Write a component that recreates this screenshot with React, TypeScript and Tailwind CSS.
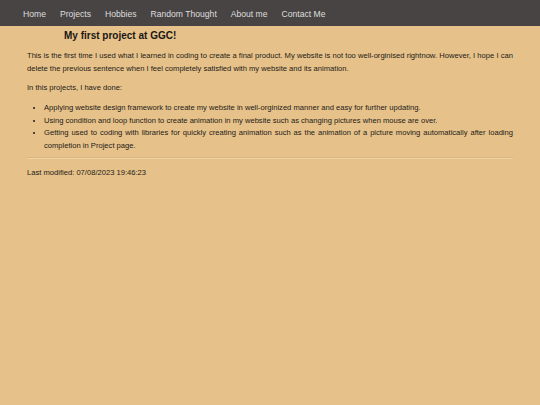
export default function App() {
  const navItems = ['Home', 'Projects', 'Hobbies', 'Random Thought', 'About me', 'Contact Me'];

  return (
    <div className="min-h-[405px] bg-[#e6c28a] text-[#1e1a17] font-['Liberation_Sans',Arial,sans-serif]">
      {/* Top navigation */}
      <nav className="h-[26px] bg-[#484444] flex items-center pt-[3px] pl-[23px] gap-[14px] text-[8.6px] text-[#dedede]">
        {navItems.map((item) => (
          <a key={item} className="leading-none">
            {item}
          </a>
        ))}
      </nav>

      <main className="px-[27px]">
        <h1 className="ml-[37px] pt-[4px] text-[10px] font-bold leading-[12px] text-[#1a1614]">
          My first project at GGC!
        </h1>

        <p className="mt-[8px] text-[7.6px] leading-[12.6px] text-justify">
          This is the first time I used what I learned in coding to create a final product. My website is not too
          well-orginised rightnow. However, I hope I can delete the previous sentence when I feel completely satisfied
          with my website and its animation.
        </p>

        <p className="mt-[6.5px] text-[7.6px] leading-[12.6px]">In this projects, I have done:</p>

        <ul className="mt-[8px] pl-[17px] list-disc text-[7.6px] leading-[12.4px] text-justify">
          <li>Applying website design framework to create my website in well-orginized manner and easy for further updating.</li>
          <li>Using condition and loop function to create animation in my website such as changing pictures when mouse are over.</li>
          <li>
            Getting used to coding with libraries for quickly creating animation such as the animation of a picture
            moving automatically after loading completion in Project page.
          </li>
        </ul>

        <hr className="mt-[5.5px] border-0 border-t border-[#d9b680] shadow-[0_1px_0_#efd4a8]" />

        <p className="mt-[8.5px] text-[7.6px] leading-[12.6px]">Last modified: 07/08/2023 19:46:23</p>
      </main>
    </div>
  );
}
